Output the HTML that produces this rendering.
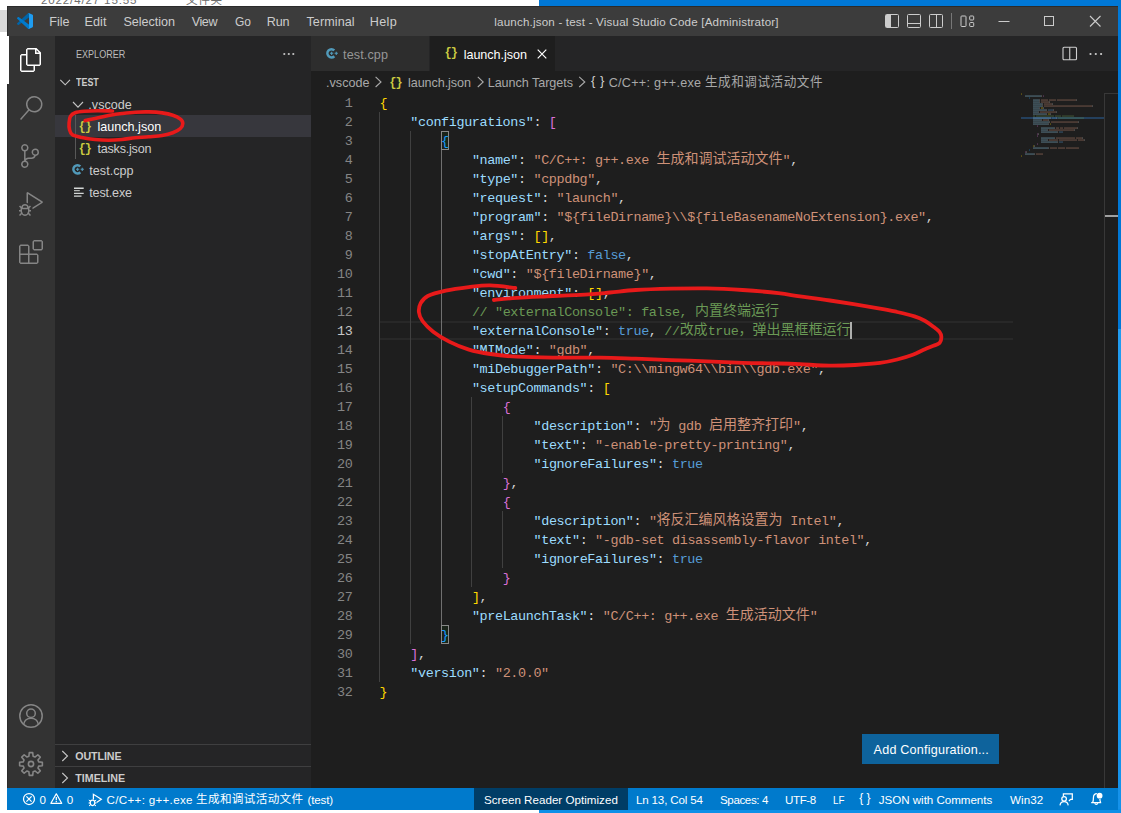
<!DOCTYPE html>
<html lang="zh"><head><meta charset="utf-8"><title>launch.json - test - Visual Studio Code [Administrator]</title>
<style>
html,body{margin:0;padding:0}body{width:1121px;height:813px;position:relative;overflow:hidden;background:#fff;font-family:"Liberation Sans","Noto Sans CJK SC",sans-serif;-webkit-font-smoothing:antialiased}
.a{position:absolute}.t{position:absolute;white-space:pre;line-height:1;margin:0}
.ln{position:absolute;left:311px;width:41.500px;text-align:right;font:13.45px "Liberation Mono","Noto Sans CJK SC",monospace;letter-spacing:-0.371px;color:#858585;line-height:19px;height:19px}
.cl{position:absolute;left:0;white-space:pre;font:13.45px "Liberation Mono","Noto Sans CJK SC",monospace;letter-spacing:-0.371px;line-height:19px;height:19px}
.cl span{display:inline-block;vertical-align:top;height:19px}
.cj{position:relative;top:-1.500px;letter-spacing:0;font-size:14px;font-family:"Liberation Mono","Noto Sans CJK SC",monospace;line-height:19px}
.ig{position:absolute;width:1px;background:#404040}
svg{position:absolute;overflow:visible}
</style></head><body>
<!-- desktop / other window behind -->
<div class="a" style="left:539px;top:0;width:582px;height:7px;background:#0078d7"></div>
<div class="a" style="left:1117px;top:0;width:4px;height:813px;background:linear-gradient(#0078d7 0,#0078d7 329px,#219cf0 329px,#1592ea 813px)"></div>
<div class="a" style="left:539px;top:809px;width:582px;height:4px;background:#0d90e8"></div>
<div class="a" style="left:0;top:10px;width:7px;height:22px;background:#d9d9d9"></div>
<!-- VS Code window -->
<div class="a" id="win" style="left:7px;top:6px;width:1111px;height:804px;background:#1e1e1e"></div>
<div class="a" id="titlebar" style="left:7px;top:6px;width:1111px;height:30px;background:#3c3c3c;border-top:1px solid #2b2b2b;border-left:1px solid #2b2b2b;box-sizing:border-box"></div>
<div class="a" id="activitybar" style="left:7px;top:36px;width:48px;height:752px;background:#333;border-left:1px solid #2b2b2b;box-sizing:border-box"></div>
<div class="a" style="left:7px;top:36px;width:2px;height:48px;background:#fff"></div>
<div class="a" id="sidebar" style="left:55px;top:36px;width:256px;height:752px;background:#252526"></div>
<div class="a" style="left:55px;top:115px;width:256px;height:22px;background:#37373d"></div>
<div class="a" style="left:75px;top:115px;width:1px;height:44px;background:#585858"></div>
<div class="a" style="left:55px;top:744px;width:256px;height:1px;background:#3f3f40"></div>
<div class="a" style="left:55px;top:766px;width:256px;height:1px;background:#3f3f40"></div>
<div class="a" id="tabbar" style="left:311px;top:36px;width:807px;height:35px;background:#252526"></div>
<div class="a" style="left:311px;top:36px;width:118px;height:35px;background:#2d2d2d"></div>
<div class="a" style="left:430px;top:36px;width:125px;height:35px;background:#1e1e1e"></div>
<!-- editor decorations -->
<div class="a" style="left:380px;top:321px;width:633px;height:19px;box-sizing:border-box;border-top:2px solid #282828;border-bottom:2px solid #282828"></div>
<div class="ig" style="left:379px;top:112px;height:570px"></div>
<div class="ig" style="left:410px;top:131px;height:513px"></div>
<div class="ig" style="left:441px;top:150px;height:475px;background:#707070"></div>
<div class="ig" style="left:471px;top:397px;height:190px"></div>
<div class="ig" style="left:502px;top:416px;height:57px"></div>
<div class="ig" style="left:502px;top:511px;height:57px"></div>
<div class="a" style="left:441px;top:131px;width:8px;height:19px;box-sizing:border-box;border:1px solid #888;background:rgba(0,100,0,.1)"></div>
<div class="a" style="left:441px;top:625px;width:8px;height:19px;box-sizing:border-box;border:1px solid #888;background:rgba(0,100,0,.1)"></div>
<!-- minimap + scrollbar -->
<div class="a" style="left:1021px;top:117px;width:83px;height:2px;background:#264f78;opacity:.7"></div>
<div class="a" style="left:1104px;top:93px;width:14px;height:695px;box-sizing:border-box;border-left:1px solid #383838;border-top:1px solid #383838"></div>
<div class="a" style="left:1105px;top:215px;width:13px;height:2px;background:#a0a0a0"></div>
<!-- status bar -->
<div class="a" id="statusbar" style="left:7px;top:788px;width:1111px;height:22px;background:#007acc"></div>
<div class="a" style="left:473.5px;top:788px;width:154px;height:22px;background:#003d66"></div>
<!-- add config button -->
<div class="a" style="left:862px;top:734px;width:137px;height:30px;background:#0e639c"></div>
<div class="a" id="code" style="left:0;top:0;width:1104px;height:788px">
<div class="ln" style="top:94px;color:#858585">1</div><div class="cl" style="top:94px;left:379.50px"><span style="color:#ffd700">{</span></div>
<div class="ln" style="top:113px;color:#858585">2</div><div class="cl" style="top:113px;left:410.30px"><span style="color:#9cdcfe">"configurations"</span><span style="color:#d4d4d4">: </span><span style="color:#da70d6">[</span></div>
<div class="ln" style="top:132px;color:#858585">3</div><div class="cl" style="top:132px;left:441.10px"><span style="color:#179fff">{</span></div>
<div class="ln" style="top:151px;color:#858585">4</div><div class="cl" style="top:151px;left:471.90px"><span style="color:#9cdcfe">"name"</span><span style="color:#d4d4d4">: </span><span style="color:#ce9178">"C/C++: g++.exe </span><span class="cj" style="color:#ce9178;width:126px">生成和调试活动文件</span><span style="color:#ce9178">"</span><span style="color:#d4d4d4">,</span></div>
<div class="ln" style="top:170px;color:#858585">5</div><div class="cl" style="top:170px;left:471.90px"><span style="color:#9cdcfe">"type"</span><span style="color:#d4d4d4">: </span><span style="color:#ce9178">"cppdbg"</span><span style="color:#d4d4d4">,</span></div>
<div class="ln" style="top:189px;color:#858585">6</div><div class="cl" style="top:189px;left:471.90px"><span style="color:#9cdcfe">"request"</span><span style="color:#d4d4d4">: </span><span style="color:#ce9178">"launch"</span><span style="color:#d4d4d4">,</span></div>
<div class="ln" style="top:208px;color:#858585">7</div><div class="cl" style="top:208px;left:471.90px"><span style="color:#9cdcfe">"program"</span><span style="color:#d4d4d4">: </span><span style="color:#ce9178">"${fileDirname}\\${fileBasenameNoExtension}.exe"</span><span style="color:#d4d4d4">,</span></div>
<div class="ln" style="top:227px;color:#858585">8</div><div class="cl" style="top:227px;left:471.90px"><span style="color:#9cdcfe">"args"</span><span style="color:#d4d4d4">: </span><span style="color:#ffd700">[]</span><span style="color:#d4d4d4">,</span></div>
<div class="ln" style="top:246px;color:#858585">9</div><div class="cl" style="top:246px;left:471.90px"><span style="color:#9cdcfe">"stopAtEntry"</span><span style="color:#d4d4d4">: </span><span style="color:#569cd6">false</span><span style="color:#d4d4d4">,</span></div>
<div class="ln" style="top:265px;color:#858585">10</div><div class="cl" style="top:265px;left:471.90px"><span style="color:#9cdcfe">"cwd"</span><span style="color:#d4d4d4">: </span><span style="color:#ce9178">"${fileDirname}"</span><span style="color:#d4d4d4">,</span></div>
<div class="ln" style="top:284px;color:#858585">11</div><div class="cl" style="top:284px;left:471.90px"><span style="color:#9cdcfe">"environment"</span><span style="color:#d4d4d4">: </span><span style="color:#ffd700">[]</span><span style="color:#d4d4d4">,</span></div>
<div class="ln" style="top:303px;color:#858585">12</div><div class="cl" style="top:303px;left:471.90px"><span style="color:#6a9955">// "externalConsole": false, </span><span class="cj" style="color:#6a9955;width:84px">内置终端运行</span></div>
<div class="ln" style="top:322px;color:#c6c6c6">13</div><div class="cl" style="top:322px;left:471.90px"><span style="color:#9cdcfe">"externalConsole"</span><span style="color:#d4d4d4">: </span><span style="color:#569cd6">true</span><span style="color:#d4d4d4">, </span><span style="color:#6a9955">//</span><span class="cj" style="color:#6a9955;width:28px">改成</span><span style="color:#6a9955">true</span><span class="cj" style="color:#6a9955;width:112px">，弹出黑框框运行</span></div>
<div class="ln" style="top:341px;color:#858585">14</div><div class="cl" style="top:341px;left:471.90px"><span style="color:#9cdcfe">"MIMode"</span><span style="color:#d4d4d4">: </span><span style="color:#ce9178">"gdb"</span><span style="color:#d4d4d4">,</span></div>
<div class="ln" style="top:360px;color:#858585">15</div><div class="cl" style="top:360px;left:471.90px"><span style="color:#9cdcfe">"miDebuggerPath"</span><span style="color:#d4d4d4">: </span><span style="color:#ce9178">"C:\\mingw64\\bin\\gdb.exe"</span><span style="color:#d4d4d4">,</span></div>
<div class="ln" style="top:379px;color:#858585">16</div><div class="cl" style="top:379px;left:471.90px"><span style="color:#9cdcfe">"setupCommands"</span><span style="color:#d4d4d4">: </span><span style="color:#ffd700">[</span></div>
<div class="ln" style="top:398px;color:#858585">17</div><div class="cl" style="top:398px;left:502.70px"><span style="color:#da70d6">{</span></div>
<div class="ln" style="top:417px;color:#858585">18</div><div class="cl" style="top:417px;left:533.50px"><span style="color:#9cdcfe">"description"</span><span style="color:#d4d4d4">: </span><span style="color:#ce9178">"</span><span class="cj" style="color:#ce9178;width:14px">为</span><span style="color:#ce9178"> gdb </span><span class="cj" style="color:#ce9178;width:84px">启用整齐打印</span><span style="color:#ce9178">"</span><span style="color:#d4d4d4">,</span></div>
<div class="ln" style="top:436px;color:#858585">19</div><div class="cl" style="top:436px;left:533.50px"><span style="color:#9cdcfe">"text"</span><span style="color:#d4d4d4">: </span><span style="color:#ce9178">"-enable-pretty-printing"</span><span style="color:#d4d4d4">,</span></div>
<div class="ln" style="top:455px;color:#858585">20</div><div class="cl" style="top:455px;left:533.50px"><span style="color:#9cdcfe">"ignoreFailures"</span><span style="color:#d4d4d4">: </span><span style="color:#569cd6">true</span></div>
<div class="ln" style="top:474px;color:#858585">21</div><div class="cl" style="top:474px;left:502.70px"><span style="color:#da70d6">}</span><span style="color:#d4d4d4">,</span></div>
<div class="ln" style="top:493px;color:#858585">22</div><div class="cl" style="top:493px;left:502.70px"><span style="color:#da70d6">{</span></div>
<div class="ln" style="top:512px;color:#858585">23</div><div class="cl" style="top:512px;left:533.50px"><span style="color:#9cdcfe">"description"</span><span style="color:#d4d4d4">: </span><span style="color:#ce9178">"</span><span class="cj" style="color:#ce9178;width:126px">将反汇编风格设置为</span><span style="color:#ce9178"> Intel"</span><span style="color:#d4d4d4">,</span></div>
<div class="ln" style="top:531px;color:#858585">24</div><div class="cl" style="top:531px;left:533.50px"><span style="color:#9cdcfe">"text"</span><span style="color:#d4d4d4">: </span><span style="color:#ce9178">"-gdb-set disassembly-flavor intel"</span><span style="color:#d4d4d4">,</span></div>
<div class="ln" style="top:550px;color:#858585">25</div><div class="cl" style="top:550px;left:533.50px"><span style="color:#9cdcfe">"ignoreFailures"</span><span style="color:#d4d4d4">: </span><span style="color:#569cd6">true</span></div>
<div class="ln" style="top:569px;color:#858585">26</div><div class="cl" style="top:569px;left:502.70px"><span style="color:#da70d6">}</span></div>
<div class="ln" style="top:588px;color:#858585">27</div><div class="cl" style="top:588px;left:471.90px"><span style="color:#ffd700">]</span><span style="color:#d4d4d4">,</span></div>
<div class="ln" style="top:607px;color:#858585">28</div><div class="cl" style="top:607px;left:471.90px"><span style="color:#9cdcfe">"preLaunchTask"</span><span style="color:#d4d4d4">: </span><span style="color:#ce9178">"C/C++: g++.exe </span><span class="cj" style="color:#ce9178;width:84px">生成活动文件</span><span style="color:#ce9178">"</span></div>
<div class="ln" style="top:626px;color:#858585">29</div><div class="cl" style="top:626px;left:441.10px"><span style="color:#179fff">}</span></div>
<div class="ln" style="top:645px;color:#858585">30</div><div class="cl" style="top:645px;left:410.30px"><span style="color:#da70d6">]</span><span style="color:#d4d4d4">,</span></div>
<div class="ln" style="top:664px;color:#858585">31</div><div class="cl" style="top:664px;left:410.30px"><span style="color:#9cdcfe">"version"</span><span style="color:#d4d4d4">: </span><span style="color:#ce9178">"2.0.0"</span></div>
<div class="ln" style="top:683px;color:#858585">32</div><div class="cl" style="top:683px;left:379.50px"><span style="color:#ffd700">}</span></div>
</div>
<svg id="minimap" style="left:1021px;top:93px" width="83" height="64" viewBox="0 0 83 64" opacity=".42"><rect x="0" y="0.5" width="1" height="1.100" fill="#ffd700"/><rect x="4" y="2.5" width="16" height="1.100" fill="#9cdcfe"/><rect x="20" y="2.5" width="1" height="1.100" fill="#d4d4d4"/><rect x="22" y="2.5" width="1" height="1.100" fill="#da70d6"/><rect x="8" y="4.5" width="1" height="1.100" fill="#179fff"/><rect x="12" y="6.5" width="6" height="1.100" fill="#9cdcfe"/><rect x="18" y="6.5" width="1" height="1.100" fill="#d4d4d4"/><rect x="20" y="6.5" width="7" height="1.100" fill="#ce9178"/><rect x="28" y="6.5" width="7" height="1.100" fill="#ce9178"/><rect x="36" y="6.5" width="18" height="1.100" fill="#ce9178"/><rect x="54" y="6.5" width="1" height="1.100" fill="#ce9178"/><rect x="55" y="6.5" width="1" height="1.100" fill="#d4d4d4"/><rect x="12" y="8.5" width="6" height="1.100" fill="#9cdcfe"/><rect x="18" y="8.5" width="1" height="1.100" fill="#d4d4d4"/><rect x="20" y="8.5" width="8" height="1.100" fill="#ce9178"/><rect x="28" y="8.5" width="1" height="1.100" fill="#d4d4d4"/><rect x="12" y="10.5" width="9" height="1.100" fill="#9cdcfe"/><rect x="21" y="10.5" width="1" height="1.100" fill="#d4d4d4"/><rect x="23" y="10.5" width="8" height="1.100" fill="#ce9178"/><rect x="31" y="10.5" width="1" height="1.100" fill="#d4d4d4"/><rect x="12" y="12.5" width="9" height="1.100" fill="#9cdcfe"/><rect x="21" y="12.5" width="1" height="1.100" fill="#d4d4d4"/><rect x="23" y="12.5" width="48" height="1.100" fill="#ce9178"/><rect x="71" y="12.5" width="1" height="1.100" fill="#d4d4d4"/><rect x="12" y="14.5" width="6" height="1.100" fill="#9cdcfe"/><rect x="18" y="14.5" width="1" height="1.100" fill="#d4d4d4"/><rect x="20" y="14.5" width="2" height="1.100" fill="#ffd700"/><rect x="22" y="14.5" width="1" height="1.100" fill="#d4d4d4"/><rect x="12" y="16.5" width="13" height="1.100" fill="#9cdcfe"/><rect x="25" y="16.5" width="1" height="1.100" fill="#d4d4d4"/><rect x="27" y="16.5" width="5" height="1.100" fill="#569cd6"/><rect x="32" y="16.5" width="1" height="1.100" fill="#d4d4d4"/><rect x="12" y="18.5" width="5" height="1.100" fill="#9cdcfe"/><rect x="17" y="18.5" width="1" height="1.100" fill="#d4d4d4"/><rect x="19" y="18.5" width="16" height="1.100" fill="#ce9178"/><rect x="35" y="18.5" width="1" height="1.100" fill="#d4d4d4"/><rect x="12" y="20.5" width="13" height="1.100" fill="#9cdcfe"/><rect x="25" y="20.5" width="1" height="1.100" fill="#d4d4d4"/><rect x="27" y="20.5" width="2" height="1.100" fill="#ffd700"/><rect x="29" y="20.5" width="1" height="1.100" fill="#d4d4d4"/><rect x="12" y="22.5" width="2" height="1.100" fill="#6a9955"/><rect x="15" y="22.5" width="18" height="1.100" fill="#6a9955"/><rect x="34" y="22.5" width="6" height="1.100" fill="#6a9955"/><rect x="41" y="22.5" width="12" height="1.100" fill="#6a9955"/><rect x="12" y="24.5" width="17" height="1.100" fill="#9cdcfe"/><rect x="29" y="24.5" width="1" height="1.100" fill="#d4d4d4"/><rect x="31" y="24.5" width="4" height="1.100" fill="#569cd6"/><rect x="35" y="24.5" width="1" height="1.100" fill="#d4d4d4"/><rect x="37" y="24.5" width="2" height="1.100" fill="#6a9955"/><rect x="39" y="24.5" width="4" height="1.100" fill="#6a9955"/><rect x="43" y="24.5" width="4" height="1.100" fill="#6a9955"/><rect x="47" y="24.5" width="16" height="1.100" fill="#6a9955"/><rect x="12" y="26.5" width="8" height="1.100" fill="#9cdcfe"/><rect x="20" y="26.5" width="1" height="1.100" fill="#d4d4d4"/><rect x="22" y="26.5" width="5" height="1.100" fill="#ce9178"/><rect x="27" y="26.5" width="1" height="1.100" fill="#d4d4d4"/><rect x="12" y="28.5" width="16" height="1.100" fill="#9cdcfe"/><rect x="28" y="28.5" width="1" height="1.100" fill="#d4d4d4"/><rect x="30" y="28.5" width="27" height="1.100" fill="#ce9178"/><rect x="57" y="28.5" width="1" height="1.100" fill="#d4d4d4"/><rect x="12" y="30.5" width="15" height="1.100" fill="#9cdcfe"/><rect x="27" y="30.5" width="1" height="1.100" fill="#d4d4d4"/><rect x="29" y="30.5" width="1" height="1.100" fill="#ffd700"/><rect x="16" y="32.5" width="1" height="1.100" fill="#da70d6"/><rect x="20" y="34.5" width="13" height="1.100" fill="#9cdcfe"/><rect x="33" y="34.5" width="1" height="1.100" fill="#d4d4d4"/><rect x="35" y="34.5" width="1" height="1.100" fill="#ce9178"/><rect x="36" y="34.5" width="2" height="1.100" fill="#ce9178"/><rect x="39" y="34.5" width="3" height="1.100" fill="#ce9178"/><rect x="43" y="34.5" width="12" height="1.100" fill="#ce9178"/><rect x="55" y="34.5" width="1" height="1.100" fill="#ce9178"/><rect x="56" y="34.5" width="1" height="1.100" fill="#d4d4d4"/><rect x="20" y="36.5" width="6" height="1.100" fill="#9cdcfe"/><rect x="26" y="36.5" width="1" height="1.100" fill="#d4d4d4"/><rect x="28" y="36.5" width="25" height="1.100" fill="#ce9178"/><rect x="53" y="36.5" width="1" height="1.100" fill="#d4d4d4"/><rect x="20" y="38.5" width="16" height="1.100" fill="#9cdcfe"/><rect x="36" y="38.5" width="1" height="1.100" fill="#d4d4d4"/><rect x="38" y="38.5" width="4" height="1.100" fill="#569cd6"/><rect x="16" y="40.5" width="1" height="1.100" fill="#da70d6"/><rect x="17" y="40.5" width="1" height="1.100" fill="#d4d4d4"/><rect x="16" y="42.5" width="1" height="1.100" fill="#da70d6"/><rect x="20" y="44.5" width="13" height="1.100" fill="#9cdcfe"/><rect x="33" y="44.5" width="1" height="1.100" fill="#d4d4d4"/><rect x="35" y="44.5" width="1" height="1.100" fill="#ce9178"/><rect x="36" y="44.5" width="18" height="1.100" fill="#ce9178"/><rect x="55" y="44.5" width="6" height="1.100" fill="#ce9178"/><rect x="61" y="44.5" width="1" height="1.100" fill="#d4d4d4"/><rect x="20" y="46.5" width="6" height="1.100" fill="#9cdcfe"/><rect x="26" y="46.5" width="1" height="1.100" fill="#d4d4d4"/><rect x="28" y="46.5" width="9" height="1.100" fill="#ce9178"/><rect x="38" y="46.5" width="18" height="1.100" fill="#ce9178"/><rect x="57" y="46.5" width="6" height="1.100" fill="#ce9178"/><rect x="63" y="46.5" width="1" height="1.100" fill="#d4d4d4"/><rect x="20" y="48.5" width="16" height="1.100" fill="#9cdcfe"/><rect x="36" y="48.5" width="1" height="1.100" fill="#d4d4d4"/><rect x="38" y="48.5" width="4" height="1.100" fill="#569cd6"/><rect x="16" y="50.5" width="1" height="1.100" fill="#da70d6"/><rect x="12" y="52.5" width="1" height="1.100" fill="#ffd700"/><rect x="13" y="52.5" width="1" height="1.100" fill="#d4d4d4"/><rect x="12" y="54.5" width="15" height="1.100" fill="#9cdcfe"/><rect x="27" y="54.5" width="1" height="1.100" fill="#d4d4d4"/><rect x="29" y="54.5" width="7" height="1.100" fill="#ce9178"/><rect x="37" y="54.5" width="7" height="1.100" fill="#ce9178"/><rect x="45" y="54.5" width="12" height="1.100" fill="#ce9178"/><rect x="57" y="54.5" width="1" height="1.100" fill="#ce9178"/><rect x="8" y="56.5" width="1" height="1.100" fill="#179fff"/><rect x="4" y="58.5" width="1" height="1.100" fill="#da70d6"/><rect x="5" y="58.5" width="1" height="1.100" fill="#d4d4d4"/><rect x="4" y="60.5" width="9" height="1.100" fill="#9cdcfe"/><rect x="13" y="60.5" width="1" height="1.100" fill="#d4d4d4"/><rect x="15" y="60.5" width="7" height="1.100" fill="#ce9178"/><rect x="0" y="62.5" width="1" height="1.100" fill="#ffd700"/></svg>
<svg style="left:17px;top:13px" width="16" height="16" viewBox="0 0 100 100" ><path fill="#0065A9" d="M96.46 10.8 75.86.88a6.23 6.23 0 0 0-7.11 1.2L1.3 63.58a4.17 4.17 0 0 0 0 6.17l5.51 5a2.77 2.77 0 0 0 3.54.16L93.36 13.37c2.73-2.07 6.64-.12 6.64 3.3v-.24a6.25 6.25 0 0 0-3.54-5.63z"/><path fill="#007ACC" d="M96.46 89.2 75.86 99.12a6.23 6.23 0 0 1-7.11-1.2L1.3 36.42a4.17 4.17 0 0 1 0-6.17l5.51-5a2.77 2.77 0 0 1 3.54-.16l83.01 61.54c2.73 2.07 6.64.12 6.64-3.3v.24a6.25 6.25 0 0 1-3.54 5.63z"/><path fill="#1F9CF0" d="M75.86 99.13a6.23 6.23 0 0 1-7.11-1.21c2.31 2.3 6.25.67 6.25-2.59V4.67c0-3.26-3.94-4.9-6.25-2.59a6.23 6.23 0 0 1 7.11-1.21l20.6 9.91A6.25 6.25 0 0 1 100 16.41v67.18a6.25 6.25 0 0 1-3.54 5.63l-20.6 9.91z"/></svg>
<svg style="left:880px;top:8px" width="230" height="26" viewBox="880 8 230 26" fill="none" stroke="#ccc" stroke-width="1"><rect x="885.5" y="14.5" width="13" height="13" rx="1"/><rect x="886" y="15" width="5" height="12" fill="#ccc" stroke="none"/><rect x="907.5" y="14.5" width="13" height="13" rx="1"/><path d="M908 23.5h12"/><rect x="929.5" y="14.5" width="13" height="13" rx="1"/><path d="M936.5 15v12"/><path d="M951.5 13v16" stroke="#777"/><rect x="961" y="16" width="5" height="10.5" rx=".8"/><rect x="969.7" y="16" width="4" height="4" rx=".8"/><rect x="969.7" y="22.5" width="4" height="4" rx=".8"/><path d="M998.5 21.5h11"/><rect x="1044.5" y="16.5" width="9" height="9"/><path d="M1090 16l10.5 10.5M1100.500 16l-10.5 10.500" stroke-width="1.100"/></svg>
<svg style="left:19.3px;top:47.6px" width="24" height="24" viewBox="0 0 24 24" ><path fill="#fff" d="M17.5 0h-9L7 1.5V6H2.5L1 7.5v15.07L2.5 24h12.07L16 22.57V18h4.7l1.3-1.43V4.5L17.5 0zm0 2.12l2.38 2.38H17.5V2.12zm-3 20.38h-12v-15H7v9.07L8.500 18h6v4.500zm6-6h-12v-15H16V6h4.500v10.500z"/></svg>
<svg style="left:19.3px;top:96px" width="24" height="24" viewBox="0 0 24 24" ><path fill="#858585" d="M15.250 0a8.250 8.250 0 0 0-6.180 13.720L1 22.880l1.120 1 8.050-9.120A8.251 8.251 0 1 0 15.250.010V0zm0 15a6.750 6.750 0 1 1 0-13.500 6.750 6.750 0 0 1 0 13.500z"/></svg>
<svg style="left:18.2px;top:144px" width="24" height="24" viewBox="0 0 24 24" ><path fill="#858585" d="M21.007 8.222A3.738 3.738 0 0 0 15.045 5.200a3.737 3.737 0 0 0 1.156 6.583 2.988 2.988 0 0 1-2.668 1.670h-2.990a4.456 4.456 0 0 0-2.989 1.165V7.400a3.737 3.737 0 1 0-1.494 0v9.117a3.776 3.776 0 1 0 1.816.099 2.990 2.990 0 0 1 2.668-1.667h2.990a4.484 4.484 0 0 0 4.223-3.039 3.736 3.736 0 0 0 3.250-3.687zM4.565 3.738a2.242 2.242 0 1 1 4.484 0 2.242 2.242 0 0 1-4.484 0zm4.484 16.441a2.242 2.242 0 1 1-4.484 0 2.242 2.242 0 0 1 4.484 0zm8.221-9.715a2.242 2.242 0 1 1 0-4.485 2.242 2.242 0 0 1 0 4.485z"/></svg>
<svg style="left:19px;top:192.3px" width="24" height="24" viewBox="0 0 24 24" ><path fill="#858585" d="M10.940 13.500l-1.320 1.320a3.730 3.730 0 0 0-7.240 0L1.060 13.500 0 14.560l1.720 1.720-.220.220V18H0v1.500h1.500v.080c.077.489.214.966.410 1.420L0 22.940 1.060 24l1.650-1.650A4.308 4.308 0 0 0 6 24a4.310 4.310 0 0 0 3.290-1.650L10.940 24 12 22.940 10.090 21c.198-.464.336-.951.410-1.450v-.100H12V18h-1.500v-1.500l-.220-.220L12 14.560l-1.060-1.060zM6 13.500a2.250 2.250 0 0 1 2.250 2.250h-4.500A2.250 2.250 0 0 1 6 13.500zm3 6a3.330 3.330 0 0 1-3 3 3.330 3.330 0 0 1-3-3v-2.250h6v2.250zm14.760-9.900v1.260L13.500 17.370V15.600l8.500-5.370L9 2v9.460a5.070 5.070 0 0 0-1.500-.720V.630L8.640 0l15.120 9.600z"/></svg>
<svg style="left:19.3px;top:240px" width="24" height="24" viewBox="0 0 24 24" ><path fill="#858585" d="M13.500 1.500L15 0h7.500L24 1.500V9l-1.500 1.500H15L13.500 9V1.500zm1.500 0V9h7.500V1.500H15zM0 15V6l1.500-1.500H9L10.500 6v7.500H18l1.500 1.500v7.500L18 24H1.500L0 22.500V15zm9-1.500V6H1.500v7.500H9zM9 15H1.500v7.500H9V15zm1.500 7.500H18V15h-7.500v7.500z"/></svg>
<svg style="left:19px;top:704px" width="24" height="24" viewBox="0 0 24 24" ><g fill="none" stroke="#858585" stroke-width="1.500"><circle cx="12" cy="12" r="11.200"/><circle cx="12" cy="9.300" r="4.300"/><path d="M4.600 20.300c.8-3.700 3.800-6 7.400-6s6.600 2.300 7.400 6"/></g></svg>
<svg style="left:19px;top:752px" width="24" height="24" viewBox="0 0 24 24" ><g fill="none" stroke="#858585" stroke-width="1.600" stroke-linejoin="round"><path d="M10.29 0.63L13.71 0.63L14.11 4.28L15.96 5.05L18.83 2.75L21.25 5.17L18.95 8.04L19.72 9.89L23.37 10.29L23.37 13.71L19.72 14.11L18.95 15.96L21.25 18.83L18.83 21.25L15.96 18.95L14.11 19.72L13.71 23.37L10.29 23.37L9.89 19.72L8.04 18.95L5.17 21.25L2.75 18.83L5.05 15.96L4.28 14.11L0.63 13.71L0.63 10.29L4.28 9.89L5.05 8.04L2.75 5.17L5.17 2.75L8.04 5.05L9.89 4.28Z"/><circle cx="12" cy="12" r="2.600"/></g></svg>
<svg style="left:283px;top:52px" width="12" height="4" viewBox="0 0 12 4"><circle cx="1.300" cy="2" r="1.100" fill="#c5c5c5"/><circle cx="5.800" cy="2" r="1.100" fill="#c5c5c5"/><circle cx="10.300" cy="2" r="1.100" fill="#c5c5c5"/></svg>
<svg style="left:0;top:0" width="1" height="1"><path d="M60.3 79.8L65.2 84.8L70.0 79.8" fill="none" stroke="#c5c5c5" stroke-width="1.1"/></svg>
<svg style="left:0;top:0" width="1" height="1"><path d="M73.0 102.0L78.0 107.2L83.0 102.0" fill="none" stroke="#c5c5c5" stroke-width="1.1"/></svg>
<svg style="left:0;top:0" width="1" height="1"><path d="M62.3 751.0L67.5 756.0L62.3 761.0" fill="none" stroke="#c5c5c5" stroke-width="1.1"/></svg>
<svg style="left:0;top:0" width="1" height="1"><path d="M62.3 773.0L67.5 778.0L62.3 783.0" fill="none" stroke="#c5c5c5" stroke-width="1.1"/></svg>
<div class="t" style="left:78.4px;top:120.6px;font:700 12px 'Liberation Mono',monospace;color:#cbcb41;letter-spacing:-.900px;line-height:1">{}</div>
<div class="t" style="left:78.4px;top:142.6px;font:700 12px 'Liberation Mono',monospace;color:#cbcb41;letter-spacing:-.900px;line-height:1">{}</div>
<svg style="left:71.8px;top:164.3px" width="13" height="11" viewBox="0 0 13 11"><path d="M8.300 2.400A4.050 4.050 0 1 0 8.300 8.200" fill="none" stroke="#519aba" stroke-width="2.600"/><path d="M4 5.300h3.300M5.650 3.650v3.300M8.600 5.300h3.300M10.250 3.650v3.300" stroke="#519aba" stroke-width="1.100" fill="none"/></svg>
<svg style="left:74.3px;top:187px" width="10" height="11" viewBox="0 0 10 11"><path d="M0 1.200h9.700M0 6.400h9.700M0 9.100h7.500" stroke="#d4d7d6" stroke-width="1.400" fill="none"/><path d="M0 3.700h5.800" stroke="#d4d7d6" stroke-width="1" fill="none"/></svg>
<svg style="left:325.8px;top:47.7px" width="13" height="11" viewBox="0 0 13 11"><path d="M8.300 2.400A4.050 4.050 0 1 0 8.300 8.200" fill="none" stroke="#519aba" stroke-width="2.600"/><path d="M4 5.300h3.300M5.650 3.650v3.300M8.600 5.300h3.300M10.250 3.650v3.300" stroke="#519aba" stroke-width="1.100" fill="none"/></svg>
<div class="t" style="left:444.5px;top:47.2px;font:700 12px 'Liberation Mono',monospace;color:#cbcb41;letter-spacing:-.900px;line-height:1">{}</div>
<svg style="left:537px;top:49px" width="10" height="10" viewBox="0 0 10 10"><path d="M.7.700l8.600 8.600M9.300.700L.7 9.300" stroke="#fff" stroke-width="1.200" fill="none"/></svg>
<svg style="left:1062px;top:46px" width="16" height="16" viewBox="0 0 16 16"><rect x="1" y="1.200" width="13.500" height="12.600" rx="1" fill="none" stroke="#d0d0d0" stroke-width="1.100"/><path d="M7.750 1.200v12.600" stroke="#d0d0d0" stroke-width="1.100"/></svg>
<svg style="left:1088.500px;top:52px" width="14" height="4" viewBox="0 0 14 4"><circle cx="1.500" cy="2" r="1.100" fill="#d0d0d0"/><circle cx="6.800" cy="2" r="1.100" fill="#d0d0d0"/><circle cx="12.100" cy="2" r="1.100" fill="#d0d0d0"/></svg>
<svg style="left:0;top:0" width="1" height="1"><path d="M375.6 76.9L381.0 82.0L375.6 87.0" fill="none" stroke="#a9a9a9" stroke-width="1.1"/></svg>
<svg style="left:0;top:0" width="1" height="1"><path d="M477.8 76.9L483.2 82.0L477.8 87.0" fill="none" stroke="#a9a9a9" stroke-width="1.1"/></svg>
<svg style="left:0;top:0" width="1" height="1"><path d="M579.2 76.9L584.8 82.0L579.2 87.0" fill="none" stroke="#a9a9a9" stroke-width="1.1"/></svg>
<div class="t" style="left:389.2px;top:76.6px;font:700 12px 'Liberation Mono',monospace;color:#cbcb41;letter-spacing:-.900px;line-height:1">{}</div>
<div class="t" style="left:590.900px;top:74px;font:13px 'Liberation Sans',sans-serif;color:#d0d0d0;letter-spacing:4.800px;line-height:1">{}</div>
<div class="a" style="left:850px;top:322px;width:2px;height:17px;background:#aeafad"></div>
<svg style="left:22px;top:790px" width="84" height="18" viewBox="22 790 84 18" fill="none" stroke="#fff" stroke-width="1.250"><circle cx="29" cy="799" r="5.500"/><path d="M26.400 796.400l5.200 5.200M31.600 796.400l-5.200 5.200"/><path d="M56.300 793.800L61.700 803.300H50.900Z" stroke-linejoin="round"/><path d="M56.300 797v3.300M56.300 801v1.200"/><path d="M93.400 799.600V794.300L101.300 799.300L96.600 802.400"/><ellipse cx="92.500" cy="802.800" rx="2.300" ry="2.700"/><path d="M88.800 800l1.700 1.100M96.200 800l-1.700 1.100M88.600 803h1.600M96.400 803h-1.600M89 806l1.600-1.300M96 806l-1.600-1.300" stroke-width="1"/></svg>
<div class="t" style="left:859.300px;top:792.400px;font:12px 'Liberation Sans',sans-serif;color:#fff;letter-spacing:3.200px;line-height:1">{}</div>
<svg style="left:1058px;top:791px" width="48" height="18" viewBox="1058 791 48 18" fill="none" stroke="#fff" stroke-width="1.250"><path d="M1063.400 796.100V793.800H1072.300V799.300H1070.600L1068.900 801"/><circle cx="1064.100" cy="798.800" r="2.300"/><path d="M1060 805.300c.3-2.400 1.900-3.700 4.100-3.700s3.800 1.300 4.100 3.700"/><path d="M1091.200 802.500H1101.200M1092.700 802.300c.6-.9.700-2.200.700-4.200 0-2.600 1.500-4.400 3.500-4.400M1099.900 799c0 1.600.2 2.500.7 3.300M1094.800 803.400a1.600 1.600 0 0 0 3 0"/><circle cx="1099.600" cy="795.700" r="2.900" fill="#fff" stroke="none"/></svg>
<svg id="anno" style="left:0;top:0" width="1121" height="813" viewBox="0 0 1121 813" fill="none" stroke="#e81a1a" stroke-linecap="round" stroke-linejoin="round"><path stroke-width="3.800" d="M493.9 300.0C497.8 299.6 507.2 298.5 517.0 297.8C526.8 297.1 540.8 296.6 552.7 296.0C564.6 295.4 578.9 294.9 588.4 294.3C597.9 293.7 602.1 293.2 610.0 292.5C617.9 291.8 625.5 290.6 635.7 290.0C645.9 289.4 659.5 289.0 671.4 288.7C683.3 288.4 695.1 288.2 707.0 288.4C718.9 288.6 730.8 289.2 742.7 290.0C754.6 290.8 768.9 292.1 778.4 293.2C787.9 294.3 791.4 295.2 800.0 296.4C808.6 297.6 816.7 298.5 830.0 300.5C843.3 302.5 868.8 306.7 880.0 308.6C891.2 310.5 891.5 310.7 897.2 312.0C903.0 313.3 909.9 314.9 914.5 316.4C919.1 317.8 921.6 319.0 924.8 320.7C927.9 322.4 930.9 324.8 933.4 326.7C935.9 328.6 938.2 330.2 939.5 331.9C940.8 333.6 941.4 335.1 941.4 337.0C941.4 338.9 940.8 341.7 939.5 343.1C938.2 344.6 936.1 344.6 933.4 345.7C930.7 346.8 926.5 348.5 923.1 350.0C919.7 351.5 917.1 353.1 912.8 354.7C908.5 356.3 902.7 358.1 897.2 359.5C891.7 360.9 887.0 362.0 880.0 362.9C873.0 363.8 863.3 364.5 855.0 365.0C846.7 365.5 839.2 365.8 830.0 365.7C820.8 365.6 808.6 364.6 800.0 364.2C791.4 363.8 787.9 363.7 778.4 363.5C768.9 363.3 754.6 363.2 742.7 362.8C730.8 362.4 718.9 361.8 707.0 361.3C695.1 360.9 683.3 360.5 671.4 360.1C659.5 359.7 647.6 359.1 635.7 358.7C623.8 358.3 613.8 357.8 600.0 357.6C586.2 357.4 566.5 357.8 552.7 357.6C538.9 357.5 527.4 357.3 517.0 356.7C506.6 356.1 498.3 355.2 490.3 354.0C482.3 352.8 475.8 351.7 468.9 349.6C462.0 347.5 455.1 344.6 449.2 341.6C443.2 338.6 437.6 335.1 433.2 331.7C428.8 328.3 424.9 324.3 422.5 321.0C420.1 317.7 419.2 315.1 418.9 312.1C418.6 309.1 419.2 305.9 420.7 303.2C422.2 300.5 423.6 298.1 427.8 296.0C432.0 293.9 438.9 292.2 445.7 290.7C452.5 289.2 461.5 288.0 468.9 287.1C476.3 286.2 482.6 285.2 490.3 285.4C498.0 285.5 511.1 287.6 515.3 288.0"/><path stroke-width="3.600" d="M85.1 120.6C86.8 120.3 91.2 119.4 95.1 118.6C99.0 117.8 104.0 116.3 108.5 115.5C113.0 114.7 117.4 114.0 121.9 113.5C126.4 113.0 130.8 112.5 135.3 112.2C139.8 111.9 144.2 111.8 148.7 111.9C153.2 112.0 158.1 112.3 162.1 112.9C166.1 113.5 169.8 114.3 172.8 115.3C175.8 116.3 178.4 117.6 180.1 118.9C181.8 120.2 182.8 121.8 182.8 123.4C182.8 125.1 181.8 127.2 180.1 128.8C178.4 130.4 175.8 131.7 172.8 132.8C169.8 133.9 166.1 134.8 162.1 135.5C158.1 136.2 153.2 136.4 148.7 136.8C144.2 137.2 139.8 137.4 135.3 137.8C130.8 138.2 126.4 139.1 121.9 139.5C117.4 139.9 113.0 140.2 108.5 140.2C104.0 140.2 99.5 139.9 95.1 139.5C90.6 139.1 85.6 138.3 81.8 137.5C78.0 136.7 74.5 136.1 72.4 134.8C70.4 133.5 70.0 131.5 69.5 129.5C69.0 127.5 68.9 125.0 69.1 122.8C69.2 120.6 69.4 118.0 70.4 116.3C71.4 114.6 72.8 113.5 75.1 112.7C77.4 111.9 80.6 111.6 84.4 111.3C88.2 111.0 93.1 110.8 97.8 110.8C102.5 110.8 110.0 111.0 112.5 111.0"/></svg>
<div class="t" id="t0" style="left:41.00px;top:-5.80px;font-size:11.6px;color:#6d6d6d;font-weight:400;letter-spacing:0.831px">2022/4/27 15:55</div>
<div class="t" id="t1" style="left:186.00px;top:-5.80px;font-size:11.6px;color:#6d6d6d;font-weight:400;letter-spacing:0.656px">文件夹</div>
<div class="t" id="t2" style="left:49.30px;top:15.60px;font-size:12.6px;color:#ccc;font-weight:400;letter-spacing:-0.063px">File</div>
<div class="t" id="t3" style="left:84.50px;top:15.60px;font-size:12.6px;color:#ccc;font-weight:400;letter-spacing:0.099px">Edit</div>
<div class="t" id="t4" style="left:123.50px;top:15.60px;font-size:12.6px;color:#ccc;font-weight:400;letter-spacing:-0.038px">Selection</div>
<div class="t" id="t5" style="left:191.70px;top:15.60px;font-size:12.6px;color:#ccc;font-weight:400;letter-spacing:-0.425px">View</div>
<div class="t" id="t6" style="left:235.20px;top:15.60px;font-size:12.6px;color:#ccc;font-weight:400;letter-spacing:0.000px;transform-origin:0 0;transform:scaleX(0.9526)">Go</div>
<div class="t" id="t7" style="left:266.80px;top:15.60px;font-size:12.6px;color:#ccc;font-weight:400;letter-spacing:-0.149px">Run</div>
<div class="t" id="t8" style="left:306.50px;top:15.60px;font-size:12.6px;color:#ccc;font-weight:400;letter-spacing:0.073px">Terminal</div>
<div class="t" id="t9" style="left:369.80px;top:15.60px;font-size:12.6px;color:#ccc;font-weight:400;letter-spacing:0.334px">Help</div>
<div class="t" id="t10" style="left:494.30px;top:15.80px;font-size:11.6px;color:#ccc;font-weight:400;letter-spacing:0.184px">launch.json - test - Visual Studio Code [Administrator]</div>
<div class="t" id="t11" style="left:75.50px;top:48.80px;font-size:10.7px;color:#bbb;font-weight:400;letter-spacing:0.000px;transform-origin:0 0;transform:scaleX(0.8463)">EXPLORER</div>
<div class="t" id="t12" style="left:75.50px;top:76.90px;font-size:10.7px;color:#ccc;font-weight:700;letter-spacing:0.000px;transform-origin:0 0;transform:scaleX(0.8350)">TEST</div>
<div class="t" id="t13" style="left:88.30px;top:98.70px;font-size:12.6px;color:#ccc;font-weight:400;letter-spacing:0.017px">.vscode</div>
<div class="t" id="t14" style="left:97.50px;top:120.50px;font-size:12.6px;color:#fff;font-weight:400;letter-spacing:-0.001px">launch.json</div>
<div class="t" id="t15" style="left:97.50px;top:142.60px;font-size:12.6px;color:#ccc;font-weight:400;letter-spacing:-0.232px">tasks.json</div>
<div class="t" id="t16" style="left:89.30px;top:164.50px;font-size:12.6px;color:#ccc;font-weight:400;letter-spacing:0.014px">test.cpp</div>
<div class="t" id="t17" style="left:89.30px;top:186.50px;font-size:12.6px;color:#ccc;font-weight:400;letter-spacing:-0.200px">test.exe</div>
<div class="t" id="t18" style="left:75.30px;top:750.60px;font-size:10.7px;color:#ccc;font-weight:700;letter-spacing:-0.113px">OUTLINE</div>
<div class="t" id="t19" style="left:75.30px;top:772.60px;font-size:10.7px;color:#ccc;font-weight:700;letter-spacing:-0.006px">TIMELINE</div>
<div class="t" id="t20" style="left:343.00px;top:48.50px;font-size:12.6px;color:#969696;font-weight:400;letter-spacing:0.129px">test.cpp</div>
<div class="t" id="t21" style="left:463.70px;top:48.50px;font-size:12.6px;color:#fff;font-weight:400;letter-spacing:-0.041px">launch.json</div>
<div class="t" id="t22" style="left:326.00px;top:76.60px;font-size:12.6px;color:#a9a9a9;font-weight:400;letter-spacing:0.017px">.vscode</div>
<div class="t" id="t23" style="left:408.00px;top:76.60px;font-size:12.6px;color:#a9a9a9;font-weight:400;letter-spacing:-0.071px">launch.json</div>
<div class="t" id="t24" style="left:487.70px;top:76.60px;font-size:12.6px;color:#a9a9a9;font-weight:400;letter-spacing:-0.040px">Launch Targets</div>
<div class="t" id="t25" style="left:608.70px;top:76.60px;font-size:12.6px;color:#a9a9a9;font-weight:400;letter-spacing:0.261px">C/C++: g++.exe</div>
<div class="t" id="t26" style="left:705.00px;top:75.80px;font-size:12.6px;color:#a9a9a9;font-weight:400;letter-spacing:0.531px">生成和调试活动文件</div>
<div class="t" id="t27" style="left:39.50px;top:793.90px;font-size:11.6px;color:#fff;font-weight:400;letter-spacing:0.000px">0</div>
<div class="t" id="t28" style="left:66.80px;top:793.90px;font-size:11.6px;color:#fff;font-weight:400;letter-spacing:0.000px">0</div>
<div class="t" id="t29" style="left:106.60px;top:793.90px;font-size:11.6px;color:#fff;font-weight:400;letter-spacing:0.307px">C/C++: g++.exe</div>
<div class="t" id="t30" style="left:196.00px;top:793.10px;font-size:11.6px;color:#fff;font-weight:400;letter-spacing:0.344px">生成和调试活动文件</div>
<div class="t" id="t31" style="left:307.60px;top:793.90px;font-size:11.6px;color:#fff;font-weight:400;letter-spacing:-0.170px">(test)</div>
<div class="t" id="t32" style="left:484.00px;top:793.90px;font-size:11.6px;color:#fff;font-weight:400;letter-spacing:0.021px">Screen Reader Optimized</div>
<div class="t" id="t33" style="left:636.00px;top:793.90px;font-size:11.6px;color:#fff;font-weight:400;letter-spacing:-0.177px">Ln 13, Col 54</div>
<div class="t" id="t34" style="left:720.00px;top:793.90px;font-size:11.6px;color:#fff;font-weight:400;letter-spacing:-0.389px">Spaces: 4</div>
<div class="t" id="t35" style="left:785.00px;top:793.90px;font-size:11.6px;color:#fff;font-weight:400;letter-spacing:-0.399px">UTF-8</div>
<div class="t" id="t36" style="left:833.00px;top:793.90px;font-size:11.6px;color:#fff;font-weight:400;letter-spacing:0.000px;transform-origin:0 0;transform:scaleX(0.8477)">LF</div>
<div class="t" id="t37" style="left:878.80px;top:793.90px;font-size:11.6px;color:#fff;font-weight:400;letter-spacing:-0.037px">JSON with Comments</div>
<div class="t" id="t38" style="left:1010.00px;top:793.90px;font-size:11.6px;color:#fff;font-weight:400;letter-spacing:0.096px">Win32</div>
<div class="t" id="t39" style="left:873.60px;top:743.70px;font-size:12.6px;color:#fff;font-weight:400;letter-spacing:0.204px">Add Configuration...</div>
</body></html>
